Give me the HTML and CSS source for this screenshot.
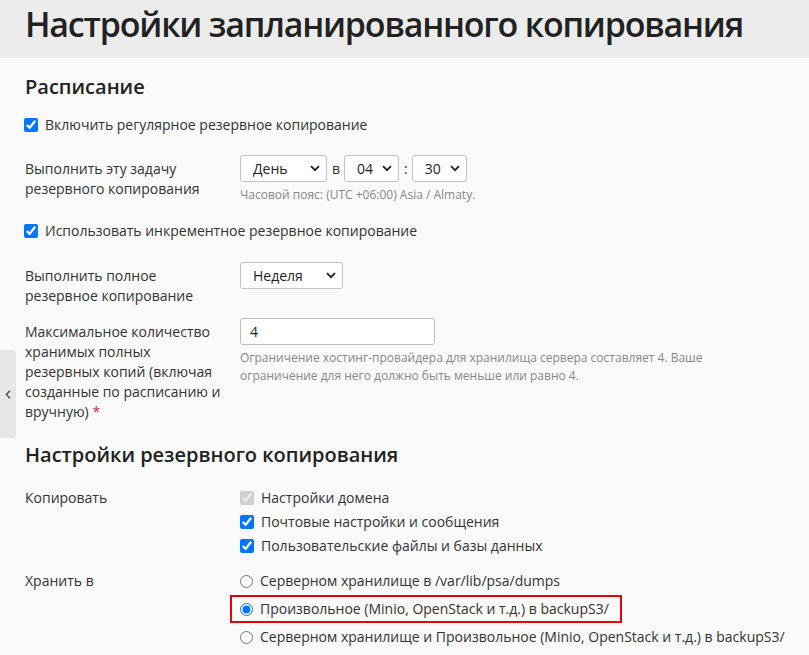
FILE: index.html
```html
<!DOCTYPE html>
<html lang="ru">
<head>
    <meta charset="UTF-8">
    <title>Настройки запланированного копирования</title>
    <link rel="stylesheet" href="styles.css">
</head>
<body>
    <div class="page-header">
        <h1>Настройки запланированного копирования</h1>
    </div>

    <button class="side-toggle" type="button">
        <svg width="6" height="9" viewBox="0 0 6 9"><path d="M5 0.8 L1.3 4.5 L5 8.2" fill="none" stroke="#444" stroke-width="1.3"/></svg>
    </button>

    <div class="content">
        <h2>Расписание</h2>

        <label class="check-line">
            <input type="checkbox" checked>
            <span>Включить регулярное резервное копирование</span>
        </label>

        <div class="form-row row-schedule">
            <div class="form-label">Выполнить эту задачу резервного копирования</div>
            <div class="form-field">
                <div class="inline-controls">
                    <span class="select-wrap w-day">
                        <select><option>День</option></select>
                        <svg class="chev" width="10" height="7" viewBox="0 0 10 7"><path d="M1 1.2 L5 5.2 L9 1.2" fill="none" stroke="#222" stroke-width="1.8"/></svg>
                    </span>
                    <span class="sep">в</span>
                    <span class="select-wrap w-num">
                        <select><option>04</option></select>
                        <svg class="chev" width="10" height="7" viewBox="0 0 10 7"><path d="M1 1.2 L5 5.2 L9 1.2" fill="none" stroke="#222" stroke-width="1.8"/></svg>
                    </span>
                    <span class="sep">:</span>
                    <span class="select-wrap w-num">
                        <select><option>30</option></select>
                        <svg class="chev" width="10" height="7" viewBox="0 0 10 7"><path d="M1 1.2 L5 5.2 L9 1.2" fill="none" stroke="#222" stroke-width="1.8"/></svg>
                    </span>
                </div>
                <div class="hint">Часовой пояс: (UTC +06:00) Asia / Almaty.</div>
            </div>
        </div>

        <label class="check-line check-incr">
            <input type="checkbox" checked>
            <span>Использовать инкрементное резервное копирование</span>
        </label>

        <div class="form-row row-full">
            <div class="form-label">Выполнить полное резервное копирование</div>
            <div class="form-field">
                <span class="select-wrap w-week">
                    <select><option>Неделя</option></select>
                    <svg class="chev" width="10" height="7" viewBox="0 0 10 7"><path d="M1 1.2 L5 5.2 L9 1.2" fill="none" stroke="#222" stroke-width="1.8"/></svg>
                </span>
            </div>
        </div>

        <div class="form-row row-max">
            <div class="form-label">Максимальное количество хранимых полных резервных копий (включая созданные по расписанию и вручную)&nbsp;<span class="required">*</span></div>
            <div class="form-field">
                <input type="text" class="text-input" value="4">
                <div class="hint hint-wide">Ограничение хостинг-провайдера для хранилища сервера составляет 4. Ваше ограничение для него должно быть меньше или равно 4.</div>
            </div>
        </div>

        <h2 class="section-two">Настройки резервного копирования</h2>

        <div class="form-row row-copy">
            <div class="form-label">Копировать</div>
            <div class="form-field">
                <label class="option"><input type="checkbox" checked disabled><span>Настройки домена</span></label>
                <label class="option"><input type="checkbox" checked><span>Почтовые настройки и сообщения</span></label>
                <label class="option"><input type="checkbox" checked><span>Пользовательские файлы и базы данных</span></label>
            </div>
        </div>

        <div class="form-row row-store">
            <div class="form-label">Хранить в</div>
            <div class="form-field radio-list">
                <label class="radio-option"><input type="radio" name="store"><span>Серверном хранилище в /var/lib/psa/dumps</span></label>
                <label class="radio-option marked"><input type="radio" name="store" checked><span>Произвольное (Minio, OpenStack и т.д.) в backupS3/</span></label>
                <label class="radio-option"><input type="radio" name="store"><span>Серверном хранилище и Произвольное (Minio, OpenStack и т.д.) в backupS3/</span></label>
            </div>
        </div>
    </div>
</body>
</html>
```

FILE: styles.css
```css
body {
    margin: 0;
    font-family: "Open Sans", "Noto Sans", sans-serif;
    font-size: 14px;
    line-height: 20px;
    color: #333;
    background-color: #fafafa;
}

.page-header {
    background-color: #ececec;
    height: 58px;
    padding-left: 25px;
    overflow: hidden;
}

.page-header h1 {
    margin: 0;
    font-size: 34px;
    line-height: 49px;
    font-weight: 600;
    color: #222;
    letter-spacing: -1.2px;
    white-space: nowrap;
}

.side-toggle {
    position: absolute;
    left: 0;
    top: 350px;
    width: 16px;
    height: 88px;
    padding: 0;
    border: none;
    border-radius: 0 4px 4px 0;
    background-color: #e6e6e6;
    display: flex;
    align-items: center;
    justify-content: center;
}

.content {
    padding: 0 25px;
}

h2 {
    margin: 15px 0 0;
    font-size: 20px;
    line-height: 28px;
    font-weight: 600;
    color: #222;
}

h2.section-two {
    margin-top: 19px;
}

.check-line {
    display: flex;
    align-items: center;
    margin-top: 14px;
    margin-left: -1px;
}

.check-line input {
    margin: 0 7px 0 0;
    width: 14px;
    height: 14px;
}

.check-incr {
    margin-top: 17px;
}

.form-row {
    display: grid;
    grid-template-columns: 215px 1fr;
}

.form-label {
    padding-right: 15px;
    padding-top: 4px;
}

.row-schedule {
    margin-top: 20px;
}

.row-full {
    margin-top: 21px;
}

.row-max {
    margin-top: 12px;
}

.inline-controls {
    display: flex;
    align-items: center;
}

.sep {
    margin: 0 4px 0 5px;
    color: #333;
}

.select-wrap {
    position: relative;
    display: inline-block;
}

.select-wrap select {
    appearance: none;
    -webkit-appearance: none;
    font-family: inherit;
    font-size: 14px;
    color: #222;
    height: 27px;
    width: 100%;
    padding: 0 0 0 12px;
    border: 1px solid #c3c3c3;
    border-radius: 3px;
    background-color: #fff;
    display: block;
}

.select-wrap .chev {
    position: absolute;
    right: 7px;
    top: 10px;
    pointer-events: none;
}

.w-day {
    width: 87px;
}

.w-num {
    width: 55px;
}

.w-week {
    width: 103px;
}

.text-input {
    display: block;
    width: 195px;
    height: 27px;
    box-sizing: border-box;
    padding: 0 9px;
    border: 1px solid #bdbdbd;
    border-radius: 3px;
    background-color: #fff;
    font-family: inherit;
    font-size: 14px;
    color: #222;
}

.hint {
    font-size: 12px;
    line-height: 18px;
    color: #888;
    margin-top: 4px;
}

.hint-wide {
    max-width: 500px;
}

.required {
    color: #d3264b;
}

.row-copy {
    margin-top: 17px;
}

.row-copy .form-label {
    padding-top: 2px;
}

.option {
    display: flex;
    align-items: center;
    line-height: 24px;
}

.option input {
    margin: 0 7px 0 0;
    width: 14px;
    height: 14px;
}

.row-store {
    margin-top: 9px;
}

.row-store .form-label {
    padding-top: 4px;
}

.radio-list {
    margin-left: -10px;
    display: flex;
    flex-direction: column;
    align-items: flex-start;
}

.radio-option {
    display: flex;
    align-items: center;
    padding: 2px 11px 2px 8px;
    border: 2px solid transparent;
    line-height: 20px;
    white-space: nowrap;
}

.radio-option input {
    margin: 0 7px 0 0;
    width: 13px;
    height: 13px;
}

.radio-option.marked {
    border-color: #e8000b;
}
```
